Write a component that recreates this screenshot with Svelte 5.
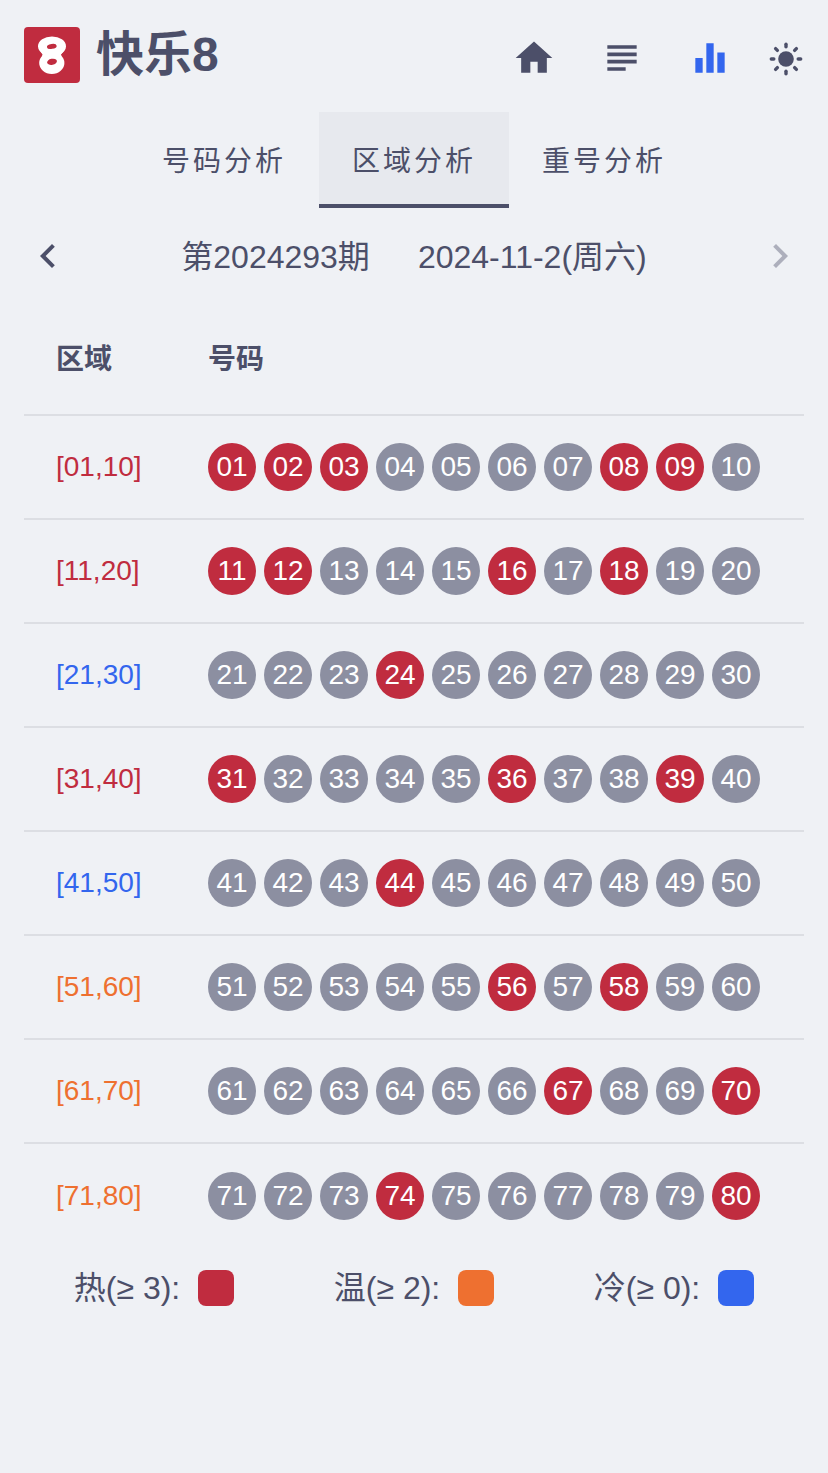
<script>
  const tabs = ['号码分析', '区域分析', '重号分析'];
  const activeTab = '区域分析';

  const drawn = new Set([1, 2, 3, 8, 9, 11, 12, 16, 18, 24, 31, 36, 39, 44, 56, 58, 67, 70, 74, 80]);
  const pad = (n) => String(n).padStart(2, '0');
  const level = (count) => (count >= 3 ? 'hot' : count >= 2 ? 'warm' : 'cold');

  const zones = Array.from({ length: 8 }, (_, z) => {
    const numbers = Array.from({ length: 10 }, (_, i) => z * 10 + i + 1);
    const hits = numbers.filter((n) => drawn.has(n)).length;
    return { label: `[${pad(numbers[0])},${pad(numbers[9])}]`, numbers, level: level(hits) };
  });

  const legend = [
    { text: '热(≥ 3):', level: 'hot' },
    { text: '温(≥ 2):', level: 'warm' },
    { text: '冷(≥ 0):', level: 'cold' }
  ];
  const rays = [0, 45, 90, 135, 180, 225, 270, 315];
</script>

<div class="page">
  <header>
    <a class="brand" href="#home">
      <svg class="logo" viewBox="0 0 56 56" aria-hidden="true">
        <rect width="56" height="56" rx="4" fill="#c02c3f" />
        <g fill="#fff">
          <ellipse cx="28" cy="19.2" rx="14" ry="9.8" />
          <ellipse cx="27.8" cy="36" rx="12.6" ry="11" />
          <path d="M16.5 24.5h23L37 27.5l1 4H17.500l1-4z" />
        </g>
        <g fill="#c02c3f">
          <ellipse cx="27.8" cy="19.4" rx="4.9" ry="2.5" transform="rotate(-9 27.8 19.4)" />
          <ellipse cx="28" cy="34.8" rx="5" ry="3" transform="rotate(-12 28 34.8)" />
        </g>
      </svg>
      <h1>快乐8</h1>
    </a>
    <nav class="actions" aria-label="主导航">
      <a href="#home" aria-label="首页">
        <svg viewBox="0 0 24 24"><path d="M10 20v-6h4v6h5v-8h3L12 3 2 12h3v8z" /></svg>
      </a>
      <a href="#list" aria-label="列表">
        <svg viewBox="0 0 24 24"><path d="M14 17H4v2h10v-2zm6-8H4v2h16V9zM4 15h16v-2H4v2zM4 5v2h16V5H4z" /></svg>
      </a>
      <a class="current" href="#analysis" aria-label="分析" aria-current="page">
        <svg viewBox="0 0 24 24"><path d="M10 20h4V4h-4v16zm-6 0h4v-8H4v8zM16 9v11h4V9h-4z" /></svg>
      </a>
      <button class="theme" type="button" aria-label="切换主题">
        <svg viewBox="0 0 36 36">
          <circle cx="18" cy="19" r="7.8" />
          {#each rays as angle}
            <path d="M18 4.3v2.500" fill="none" stroke="currentColor" stroke-width="3.4" stroke-linecap="round" transform={`rotate(${angle} 18 19)`} />
          {/each}
        </svg>
      </button>
    </nav>
  </header>

  <nav class="tabs" aria-label="分析类型">
    {#each tabs as tab}
      <button type="button" class:active={tab === activeTab}>{tab}</button>
    {/each}
  </nav>

  <main>
    <div class="period">
      <button type="button" aria-label="上一期">
        <svg viewBox="0 0 24 24"><path d="M15.41 7.41L14 6l-6 6 6 6 1.41-1.41L10.83 12z" /></svg>
      </button>
      <div class="issue"><span>第2024293期</span><span>2024-11-2(周六)</span></div>
      <button type="button" aria-label="下一期" disabled>
        <svg viewBox="0 0 24 24"><path d="M10 6L8.59 7.41 13.17 12l-4.58 4.59L10 18l6-6z" /></svg>
      </button>
    </div>

    <table>
      <thead>
        <tr><th class="zone" scope="col">区域</th><th scope="col">号码</th></tr>
      </thead>
      <tbody>
        {#each zones as zone}
          <tr>
            <td class="zone {zone.level}">{zone.label}</td>
            <td>
              <div class="balls">
                {#each zone.numbers as n}
                  <span class="ball" class:drawn={drawn.has(n)}>{pad(n)}</span>
                {/each}
              </div>
            </td>
          </tr>
        {/each}
      </tbody>
    </table>

    <div class="legend">
      {#each legend as item}
        <div class="key {item.level}"><span>{item.text}</span><i></i></div>
      {/each}
    </div>
  </main>
</div>

<style>
  :global(body) {
    background: #eff1f5;
  }
  .page {
    color: #4c4f69;
    font-family: 'Liberation Sans', 'Noto Sans CJK SC', sans-serif;
    font-size: 28px;
  }
  a {
    color: inherit;
    text-decoration: none;
  }
  button {
    padding: 0;
    border: 0;
    background: none;
    color: inherit;
    font: inherit;
  }
  svg {
    display: block;
    fill: currentColor;
  }
  header {
    display: flex;
    align-items: center;
    justify-content: space-between;
    height: 112px;
    padding: 0 24px 2px;
    box-sizing: border-box;
  }
  .brand {
    display: flex;
    align-items: center;
    gap: 16px;
  }
  .logo {
    width: 56px;
    height: 56px;
  }
  h1 {
    margin: 0;
    font-size: 48px;
    line-height: 60px;
    font-weight: 600;
  }
  .actions {
    display: flex;
    align-items: center;
    gap: 44px;
    padding-top: 6px;
  }
  .actions a svg {
    width: 44px;
    height: 44px;
  }
  .current {
    color: #3366ee;
  }
  .theme {
    margin-left: -8px;
  }
  .theme svg {
    width: 36px;
    height: 36px;
  }
  .tabs {
    display: flex;
    justify-content: center;
  }
  .tabs button {
    height: 96px;
    padding: 2px 33px 0;
    border-bottom: 4px solid transparent;
    letter-spacing: 3px;
  }
  .tabs .active {
    background: #e7e9ee;
    border-color: #4c4f69;
  }
  main {
    padding: 0 24px;
  }
  .period {
    display: flex;
    align-items: center;
    justify-content: space-between;
    height: 96px;
  }
  .period svg {
    width: 48px;
    height: 48px;
  }
  .period button:disabled {
    opacity: 0.4;
  }
  .issue {
    display: flex;
    gap: 48px;
    padding-top: 2px;
    font-size: 32px;
    line-height: 40px;
  }
  table {
    width: 100%;
    border-spacing: 0;
  }
  th,
  td {
    height: 104px;
    padding: 0 32px 0 0;
    box-sizing: border-box;
    border-bottom: 2px solid #dcdee3;
    text-align: left;
  }
  th {
    height: 112px;
    padding-bottom: 4px;
    font-weight: 600;
  }
  .zone {
    width: 184px;
    padding-left: 32px;
  }
  tbody tr:last-child td {
    border-bottom: 0;
  }
  .balls {
    display: flex;
    gap: 8px;
  }
  .ball {
    width: 48px;
    flex: none;
    border-radius: 50%;
    background: #8c8fa1;
    color: #fff;
    line-height: 48px;
    text-align: center;
  }
  .ball.drawn {
    background: #c02c3f;
  }
  .hot {
    color: #c02c3f;
  }
  .warm {
    color: #ee7030;
  }
  .cold {
    color: #3366ee;
  }
  .legend {
    display: grid;
    grid-template-columns: repeat(3, 1fr);
    padding: 20px 0;
  }
  .key {
    display: flex;
    align-items: center;
    justify-content: center;
    gap: 18px;
    font-size: 32px;
    line-height: 40px;
  }
  .key span {
    color: #4c4f69;
  }
  .key i {
    width: 36px;
    height: 36px;
    border-radius: 8px;
    background: currentColor;
  }
</style>
